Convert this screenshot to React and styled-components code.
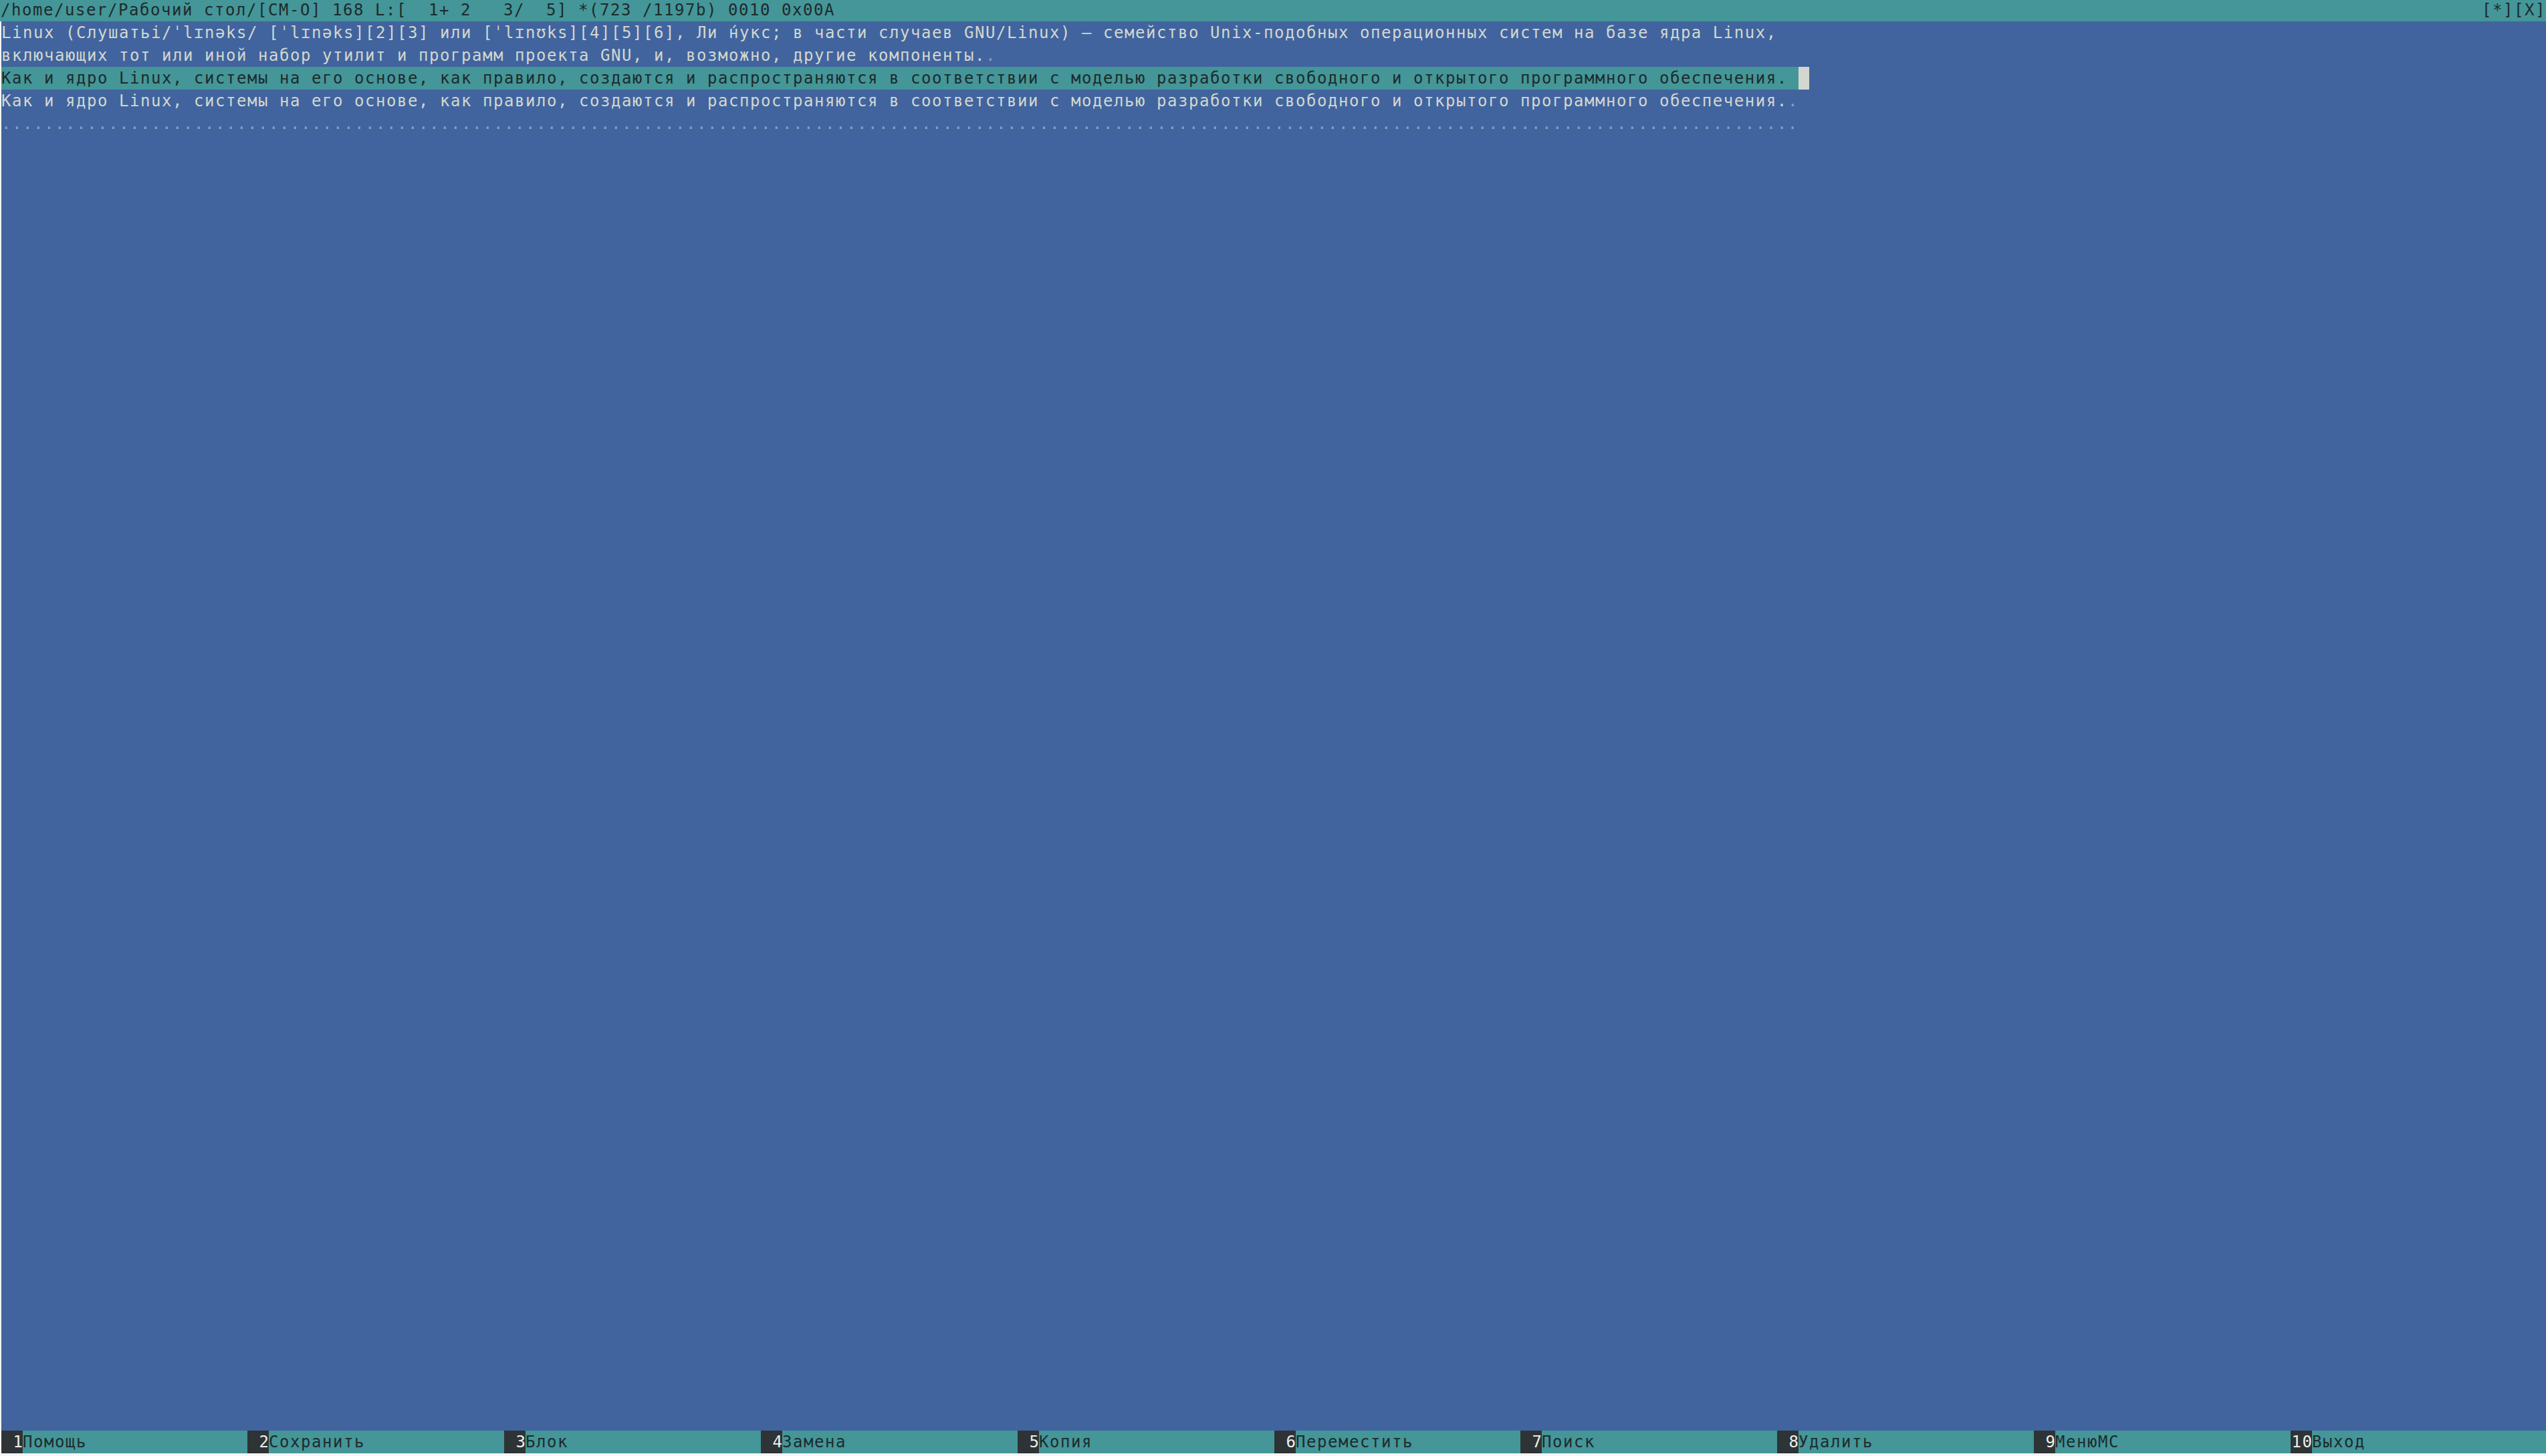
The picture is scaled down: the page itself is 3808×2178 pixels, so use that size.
import React from "react";
import styled, { createGlobalStyle } from "styled-components";

const CELL = 16;
const ROW = 34;

const Global = createGlobalStyle`
  html, body {
    margin: 0;
    padding: 0;
    background: #f6f6f5;
  }
  body {
    font-family: "DejaVu Sans Mono", "Liberation Mono", monospace;
  }
`;

const Screen = styled.div`
  width: 3808px;
  height: 2178px;
  display: flex;
  flex-direction: column;
  overflow: hidden;
  font-family: "DejaVu Sans Mono", "Liberation Mono", monospace;
  font-size: 24px;
  letter-spacing: 1.55px;
  white-space: pre;
`;

const TopBar = styled.div`
  height: 32px;
  line-height: 30px;
  background: #449698;
  color: #1d2b2d;
  display: flex;
  justify-content: space-between;
  padding-left: 1px;
  flex-shrink: 0;
`;

const Editor = styled.div`
  flex: 1;
  margin-left: 2px;
  background: #41649e;
  display: flex;
  flex-direction: column;
`;

const Line = styled.div`
  height: ${ROW}px;
  line-height: ${ROW}px;
  color: #d3d7cf;
  display: flex;
`;

const Marked = styled.span`
  background: #449698;
  color: #1d2b2d;
  display: inline-block;
  width: ${(p) => p.$cols * CELL}px;
`;

const Cursor = styled.span`
  display: inline-block;
  width: ${CELL}px;
  height: ${ROW}px;
  background: #d3d7cf;
`;

const Dim = styled.span`
  color: #8c9dc0;
`;

const ButtonBar = styled.div`
  height: ${ROW}px;
  line-height: ${ROW}px;
  margin-left: 2px;
  background: #449698;
  display: flex;
  flex-shrink: 0;
`;

const Key = styled.div`
  display: flex;
  width: ${(p) => (p.$cols ? `${p.$cols * CELL}px` : "auto")};
  flex: ${(p) => (p.$cols ? "0 0 auto" : "1")};
`;

const KeyNum = styled.span`
  display: inline-block;
  width: ${2 * CELL}px;
  text-align: right;
  background: #2e3436;
  color: #eeeeec;
  letter-spacing: 0;
  padding-right: 0;
`;

const KeyNumInner = styled.span`
  letter-spacing: 1.55px;
  margin-right: -1.55px;
`;

const KeyLabel = styled.span`
  color: #1d2b2d;
`;

const BottomGap = styled.div`
  height: 4px;
  flex-shrink: 0;
`;

const line1 =
  "Linux (Слушатьi/ˈlɪnəks/ [ˈlɪnəks][2][3] или [ˈlɪnʊks][4][5][6], Ли н\u0301укс; в части случаев GNU/Linux) — семейство Unix-подобных операционных систем на базе ядра Linux,";
const line2 =
  "включающих тот или иной набор утилит и программ проекта GNU, и, возможно, другие компоненты.";
const line3 =
  "Как и ядро Linux, системы на его основе, как правило, создаются и распространяются в соответствии с моделью разработки свободного и открытого программного обеспечения.";

const keys = [
  ["1", "Помощь", 23],
  ["2", "Сохранить", 24],
  ["3", "Блок", 24],
  ["4", "Замена", 24],
  ["5", "Копия", 24],
  ["6", "Переместить", 23],
  ["7", "Поиск", 24],
  ["8", "Удалить", 24],
  ["9", "МенюMC", 24],
  ["10", "Выход", 0],
];

export default function App() {
  const emptyRows = Array.from({ length: 57 });
  return (
    <>
      <Global />
      <Screen>
        <TopBar>
          <span>/home/user/Рабочий стол/[CM-O] 168 L:[  1+ 2   3/  5] *(723 /1197b) 0010 0x00A</span>
          <span>[*][X]</span>
        </TopBar>
        <Editor>
          <Line>{line1}</Line>
          <Line>
            {line2}
            <Dim>.</Dim>
          </Line>
          <Line>
            <Marked $cols={168}>{line3}</Marked>
            <Cursor />
          </Line>
          <Line>
            {line3}
            <Dim>.</Dim>
          </Line>
          <Line>
            <Dim>{".".repeat(168)}</Dim>
          </Line>
          {emptyRows.map((_, i) => (
            <Line key={i} />
          ))}
        </Editor>
        <ButtonBar>
          {keys.map(([n, label, cols]) => (
            <Key key={n} $cols={cols}>
              <KeyNum>
                <KeyNumInner>{n.padStart(2, " ")}</KeyNumInner>
              </KeyNum>
              <KeyLabel>{label}</KeyLabel>
            </Key>
          ))}
        </ButtonBar>
        <BottomGap />
      </Screen>
    </>
  );
}
